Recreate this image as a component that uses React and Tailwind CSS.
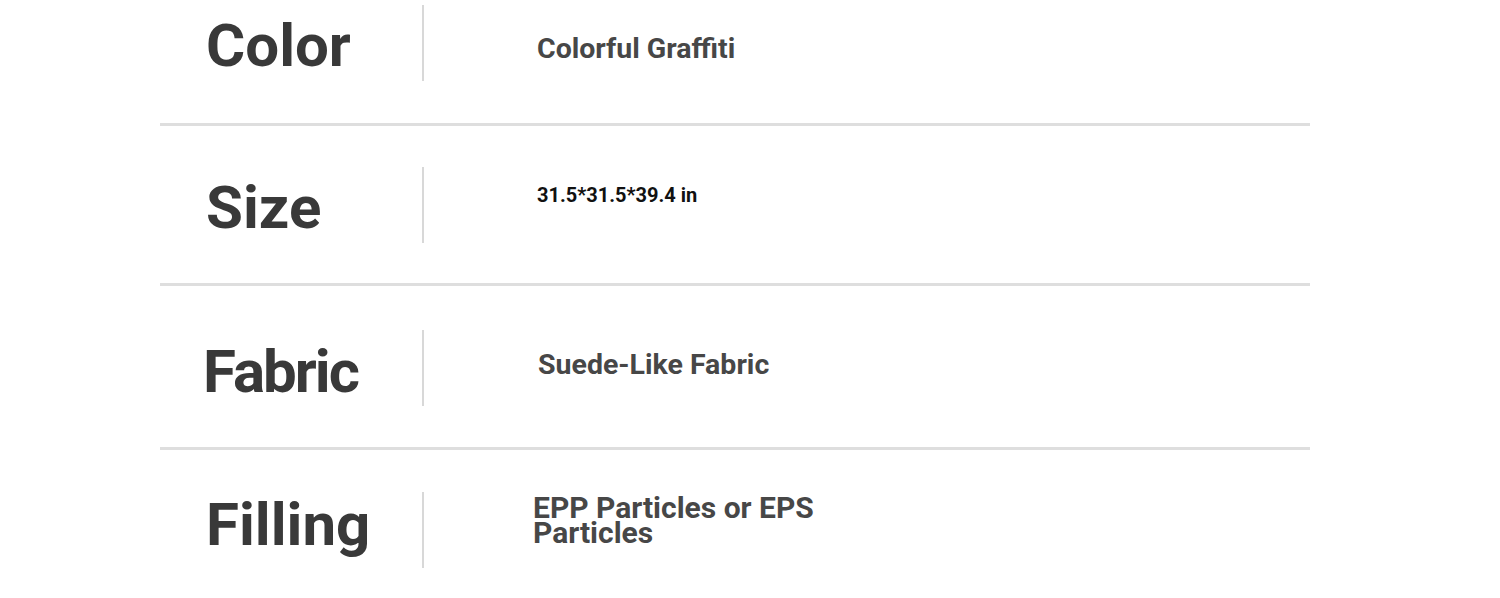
const specs = [
  {
    label: "Color",
    value: "Colorful Graffiti",
    rowPad: "pt-[5px] pb-[42px]",
    labelCls: "pt-[11px]",
    valueCls: "pt-[30px] text-[28.5px] leading-none text-[#474747]",
  },
  {
    label: "Size",
    value: "31.5*31.5*39.4 in",
    rowPad: "pt-[41px] pb-[40px]",
    labelCls: "pt-[11px]",
    valueCls: "pt-[18px] text-[20px] leading-none text-[#111111]",
  },
  {
    label: "Fabric",
    value: "Suede-Like Fabric",
    rowPad: "pt-[44px] pb-[41px]",
    labelCls: "pt-[12px] -ml-[3px] tracking-[-2px]",
    valueCls: "pt-[21px] ml-[1px] text-[28.5px] leading-none text-[#474747]",
  },
  {
    label: "Filling",
    value: "EPP Particles or EPS Particles",
    rowPad: "pt-[42px] pb-[30px]",
    labelCls: "pt-[3px]",
    valueCls: "pt-[3px] -ml-[4px] max-w-[310px] text-[30px] leading-[25px] text-[#474747]",
  },
];

const App = () => {
  return (
    <div className="w-[1500px] h-[598px] overflow-hidden bg-white font-['Roboto',sans-serif]">
      <div className="ml-[160px] w-[1150px]">
        {specs.map((s, i) => (
          <div key={s.label}>
            <div className={"flex " + s.rowPad}>
              <div className="w-[262px] h-[76px] pl-[46px]">
                <div
                  className={
                    "text-[60px] leading-none font-bold text-[#393939] " +
                    s.labelCls
                  }
                >
                  {s.label}
                </div>
              </div>
              <div className="w-[2px] h-[76px] bg-[#d8d8d8]"></div>
              <div className="pl-[113px] h-[76px]">
                <div className={"font-bold " + s.valueCls}>{s.value}</div>
              </div>
            </div>
            {i < specs.length - 1 && (
              <div className="h-[3px] bg-[#dedede]"></div>
            )}
          </div>
        ))}
      </div>
    </div>
  );
};

export default App;
